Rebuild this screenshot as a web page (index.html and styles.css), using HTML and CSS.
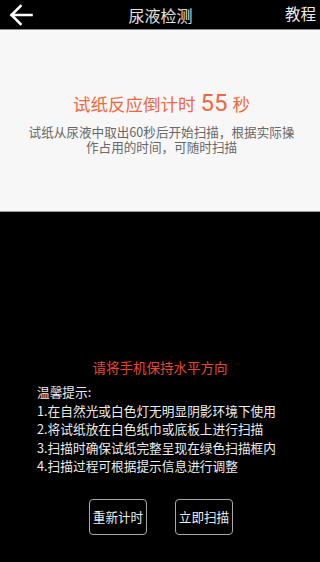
FILE: index.html
```html
<!DOCTYPE html>
<html lang="zh">
<head>
<meta charset="utf-8">
<link rel="stylesheet" href="styles.css">
</head>
<body>
<div class="page">
  <header class="bar">
    <div class="back">
      <svg width="24" height="22" viewBox="0 0 24 22"><path d="M22.5 11H2.5M11.5 2L2.5 11L11.5 20" fill="none" stroke="#fff" stroke-width="2.6" stroke-linecap="square" stroke-linejoin="miter"/></svg>
    </div>
    <div class="title">尿液检测</div>
    <div class="help">教程</div>
  </header>
  <section class="panel">
    <div class="countdown">试纸反应倒计时 <span class="num">55</span> 秒</div>
    <div class="desc">试纸从尿液中取出60秒后开始扫描，根据实际操<br>作占用的时间，可随时扫描</div>
  </section>
  <section class="scan">
    <div class="warn">请将手机保持水平方向</div>
    <div class="tips">
      <div>温馨提示:</div>
      <div>1.在自然光或白色灯无明显阴影环境下使用</div>
      <div>2.将试纸放在白色纸巾或底板上进行扫描</div>
      <div>3.扫描时确保试纸完整呈现在绿色扫描框内</div>
      <div>4.扫描过程可根据提示信息进行调整</div>
    </div>
    <div class="actions">
      <button class="btn">重新计时</button>
      <button class="btn">立即扫描</button>
    </div>
  </section>
</div>
</body>
</html>
```

FILE: styles.css
```css
* { box-sizing: border-box; }
html, body { margin: 0; padding: 0; background: #000; }
body {
  font-family: "Noto Sans CJK SC", "Noto Sans", Roboto, sans-serif;
  width: 320px;
  height: 562px;
  overflow: hidden;
}
.page { width: 320px; height: 562px; display: flex; flex-direction: column; }
.bar {
  height: 30px;
  border-bottom: 1px solid #8a8a8a;
  display: grid;
  grid-template-columns: 51px 1fr 51px;
  align-items: center;
  padding: 0 4px 0 9px;
}
.back { width: 24px; height: 22px; display: flex; }
.title {
  text-align: center;
  color: #e2e2e2;
  font-size: 16px;
  line-height: 28px;
  padding-right: 4px;
}
.help {
  color: #ececec;
  font-size: 15.5px;
  line-height: 28px;
  margin-top: -4px;
  text-align: right;
}
.panel {
  height: 182px;
  background: #f7f7f7;
  border-bottom: 1px solid #9a9a9a;
  padding-top: 61px;
  text-align: center;
}
.countdown {
  color: #f3673f;
  font-size: 17.5px;
  line-height: 24px;
  padding-left: 3px;
  word-spacing: 1px;
}
.countdown .num { font-size: 24px; font-family: Roboto, "Noto Sans", sans-serif; }
.desc {
  margin-top: 8px;
  color: #686868;
  font-size: 12.6px;
  line-height: 15px;
  padding-left: 3px;
}
.scan { flex: 1; padding-top: 146px; }
.warn {
  color: #e84631;
  font-size: 13.5px;
  line-height: 18px;
  text-align: center;
}
.tips {
  margin-top: 7px;
  padding-left: 37px;
  color: #ececec;
  font-size: 12.7px;
  line-height: 18.5px;
}
.actions {
  margin-top: 23px;
  display: flex;
  justify-content: center;
  gap: 28px;
  padding-left: 2px;
}
.btn {
  width: 58px;
  height: 36px;
  background: #000;
  border: 1.5px solid #a8a8a8;
  border-radius: 4px;
  color: #ededed;
  font-family: "Noto Sans CJK SC", sans-serif;
  font-size: 12.6px;
  padding: 0;
}
```
